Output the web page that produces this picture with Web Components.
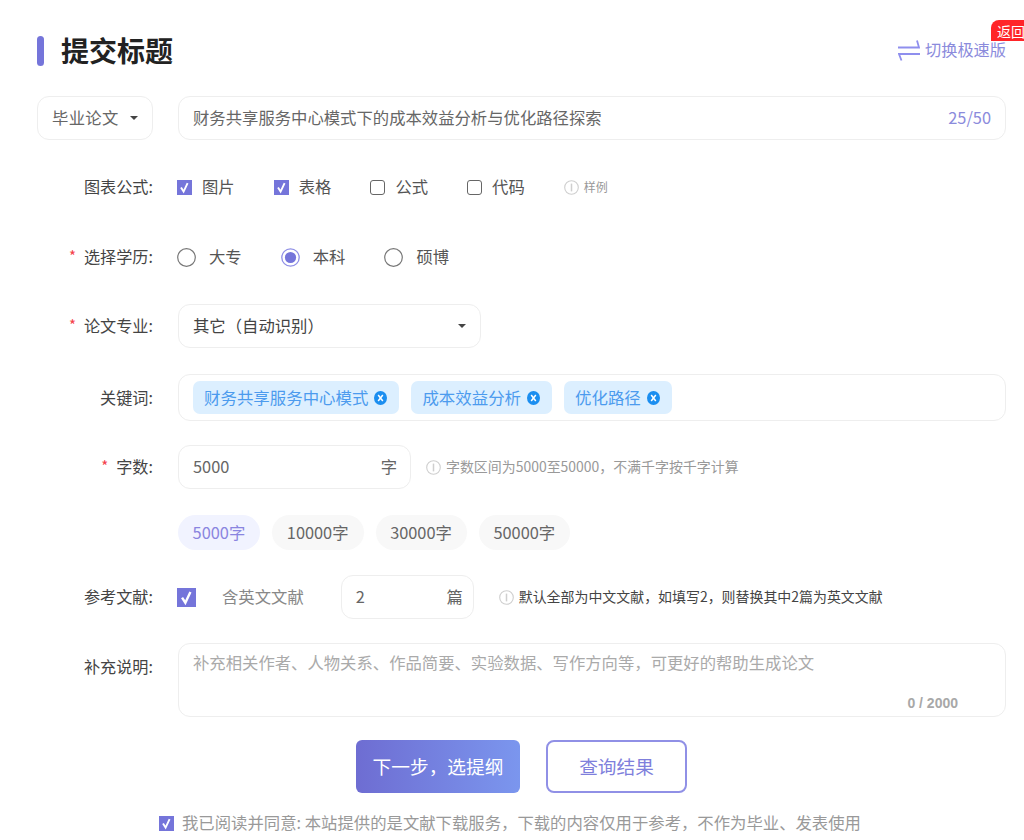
<!DOCTYPE html>
<html lang="zh"><head><meta charset="utf-8"><title>提交标题</title>
<style>
html,body{margin:0;padding:0;background:#fff;}
body{font:16.35px/24px "Noto Sans CJK SC","Liberation Sans",sans-serif;color:#555;}
</style></head>
<body>
<thesis-page>
  <title-head>提交标题</title-head>
  <form-row tall mt="30"><field-box slot="label" style="width:116px;letter-spacing:.3px" caret>毕业论文</field-box>
    <field-box suffix="25/50" accent>财务共享服务中心模式下的成本效益分析与优化路径探索</field-box></form-row>
  <form-row label="图表公式:" mt="35">
    <option-group gap="39">
      <check-item checked>图片</check-item><check-item checked>表格</check-item><check-item>公式</check-item><check-item>代码</check-item>
    </option-group>
    <info-hint small style="margin-left:39px">样例</info-hint>
  </form-row>
  <form-row label="选择学历:" required mt="46">
    <option-group gap="39"><radio-item>大专</radio-item><radio-item checked>本科</radio-item><radio-item>硕博</radio-item></option-group>
  </form-row>
  <form-row label="论文专业:" required mt="35"><field-box style="width:303px" caret dark>其它（自动识别）</field-box></form-row>
  <form-row label="关键词:" mt="26">
    <tag-box><key-tag>财务共享服务中心模式</key-tag><key-tag>成本效益分析</key-tag><key-tag>优化路径</key-tag></tag-box>
  </form-row>
  <form-row label="字数:" required mt="24">
    <field-box style="width:233px;padding-right:13px" suffix="字">5000</field-box>
    <info-hint style="margin-left:15px">字数区间为5000至50000，不满千字按千字计算</info-hint>
  </form-row>
  <form-row mt="26">
    <option-group gap="12"><word-chip active>5000字</word-chip><word-chip>10000字</word-chip><word-chip>30000字</word-chip><word-chip>50000字</word-chip></option-group>
  </form-row>
  <form-row label="参考文献:" mt="25">
    <check-item big muted>含英文文献</check-item>
    <field-box style="width:133px;margin-left:37px;padding-right:10px" suffix="篇">2</field-box>
    <info-hint dark style="margin-left:25px">默认全部为中文文献，如填写2，则替换其中2篇为英文文献</info-hint>
  </form-row>
  <form-row label="补充说明:" top mt="24"><note-area count="0 / 2000">补充相关作者、人物关系、作品简要、实验数据、写作方向等，可更好的帮助生成论文</note-area></form-row>
  <action-bar>
    <action-button primary>下一步，选提纲</action-button>
    <action-button>查询结果</action-button>
  </action-bar>
  <agree-line>我已阅读并同意: 本站提供的是文献下载服务，下载的内容仅用于参考，不作为毕业、发表使用</agree-line>
</thesis-page>
<script>
function def(name, render){
  customElements.define(name, class extends HTMLElement{
    connectedCallback(){
      if(this.shadowRoot) return;
      this.attachShadow({mode:'open'}).innerHTML = render(this);
    }
  });
}
const CHECK='<svg viewBox="0 0 15 15" width="100%" height="100%" style="display:block"><rect width="15" height="15" fill="#7575da"/><path d="M4 7.6 6.6 11.6 10.6 3.2" fill="none" stroke="#fff" stroke-width="1.9"/></svg>';
const INFO=()=>`<svg width="15" height="15" viewBox="0 0 15 15" style="flex:none"><circle cx="7.5" cy="7.5" r="6.8" fill="none" stroke="#cfcfcf" stroke-width="1.1"/><path d="M7.5 3.6V11.4" stroke="#cfcfcf" stroke-width="1.5"/></svg>`;

def('thesis-page',()=>`<style>:host{display:block;position:relative;height:840px;box-sizing:border-box;padding:36px 18px 0 37px;overflow:hidden}
.back{position:absolute;right:-6px;top:20px;width:39px;height:21px;background:#ff2529;color:#fff;border-radius:8px 0 0 0;font-size:14px;line-height:22px;padding-left:6px;box-sizing:border-box;white-space:nowrap;}</style>
<div class="back">返回</div><slot></slot>`);

def('title-head',()=>`<style>:host{display:flex;align-items:center;height:30px}
.bar{width:7px;height:30px;border-radius:4px;background:#7575da;margin-right:17px}
h1{margin:0 0 2px;font-size:28px;line-height:28px;font-weight:700;color:#222;flex:1}
.sw{display:flex;align-items:center;color:#8b8bdc;font-size:16.2px;gap:5px;margin-bottom:1px}
.sw span{padding-bottom:3px}</style>
<div class="bar"></div><h1><slot></slot></h1>
<div class="sw"><svg width="22" height="21" viewBox="0 0 22 21"><path d="M0 7.5H21L19 .5M22 14H1L3.5 20.5" fill="none" stroke="#8f8fee" stroke-width="1.8"/></svg><span>切换极速版</span></div>`);

def('form-row',h=>{
  const top=h.hasAttribute('top'), tall=h.hasAttribute('tall');
  return `<style>:host{display:grid;grid-template-columns:116px 1fr;column-gap:25px;margin-top:${h.getAttribute('mt')||0}px}
.l{display:flex;justify-content:flex-end;align-items:${top?'flex-start':'center'};${top?'padding-top:12px;':tall?'':'padding-bottom:2px;'}line-height:22px;font-size:16.15px;color:#444;white-space:nowrap;gap:8px}
.s{color:#f4404a;font-size:15px}
.c{display:flex;align-items:center;min-width:0}</style>
<div class="l"><slot name="label">${h.hasAttribute('required')?'<span class="s">*</span>':''}${h.getAttribute('label')||''}</slot></div>
<div class="c"><slot></slot></div>`;
});

def('field-box',h=>{
  const suf=h.getAttribute('suffix');
  return `<style>:host{display:flex;align-items:center;flex:${h.style.width?'none':'1'};height:44px;box-sizing:border-box;border:1px solid #eeeeee;border-radius:12px;padding:0 14px;font-size:16.35px;color:${h.hasAttribute('dark')?'#444':'#666'};white-space:nowrap;background:#fff}
.t{flex:1;padding-bottom:2px}.x{padding-bottom:2px;color:${h.hasAttribute('accent')?'#8b8bdc':'#666'}}
.caret{width:0;height:0;border:4.5px solid transparent;border-top:4.5px solid #444;border-bottom:0}</style>
<span class="t"><slot></slot></span>${suf?`<span class="x">${suf}</span>`:''}${h.hasAttribute('caret')?'<span class="caret"></span>':''}`;
});

def('option-group',h=>`<style>:host{display:flex;align-items:center;gap:${h.getAttribute('gap')}px}</style><slot></slot>`);

def('check-item',h=>{
  const big=h.hasAttribute('big'), on=h.hasAttribute('checked')||big, s=big?19:15;
  return `<style>:host{display:inline-flex;align-items:center;gap:${big?26:10}px;color:${big?'#888':'#555'};height:24px;line-height:22px;white-space:nowrap;margin-left:-1px}
:host(:not(:first-child)){margin-left:0}
span+span{padding-bottom:2px}
.b{width:${s}px;height:${s}px;box-sizing:border-box;${on?'':'border:1.3px solid #666;border-radius:3px;'}flex:none}</style>
<span class="b">${on?CHECK:''}</span><span><slot></slot></span>`;
});

def('radio-item',h=>`<style>:host{display:inline-flex;align-items:center;gap:13px;height:24px;line-height:22px;color:#555;white-space:nowrap;margin-left:-1px}
:host(:not(:first-child)){margin-left:0}
span{padding-bottom:2px}
svg{flex:none}</style>
<svg width="19" height="19" viewBox="0 0 19 19">${h.hasAttribute('checked')
 ?'<circle cx="9.5" cy="9.5" r="8.7" fill="#fff" stroke="#8f8fe6" stroke-width="1.3"/><circle cx="9.5" cy="9.5" r="5.6" fill="#7575da"/>'
 :'<circle cx="9.5" cy="9.5" r="8.8" fill="#fff" stroke="#777" stroke-width="1.2"/>'}</svg><span><slot></slot></span>`);

def('tag-box',()=>`<style>:host{display:flex;flex:1;align-items:center;gap:12px;height:47px;box-sizing:border-box;border:1px solid #eeeeee;border-radius:12px;padding:0 14px}</style><slot></slot>`);

def('key-tag',()=>`<style>:host{display:inline-flex;align-items:center;gap:6px;height:33px;padding:0 12px 0 11px;background:#dcefff;border-radius:7px;color:#4c9bee;white-space:nowrap;font-size:16.45px}
span{padding-bottom:2px}
svg{flex:none}</style><span><slot></slot></span>
<svg width="13" height="14" viewBox="0 0 13 14"><ellipse cx="6.5" cy="7" rx="6.5" ry="7" fill="#1b8ef0"/><path d="M4.2 4 8.8 10M8.8 4 4.2 10" stroke="#fff" stroke-width="1.5"/></svg>`);

def('word-chip',h=>`<style>:host{display:inline-flex;align-items:center;height:35px;padding:0 15px 0 14.6px;border-radius:18px;white-space:nowrap;background:${h.hasAttribute('active')?'#f1f3ff':'#f8f8f8'};color:${h.hasAttribute('active')?'#8a85e0':'#666'}}
span{padding-bottom:2px}</style><span><slot></slot></span>`);

def('info-hint',h=>`<style>:host{display:inline-flex;align-items:center;gap:5px;height:24px;line-height:22px;white-space:nowrap;font-size:${h.hasAttribute('small')?'12px':'13.95px'};color:${h.hasAttribute('dark')?'#444':'#999'}}
span{padding-bottom:${h.hasAttribute('small')?0:2}px}</style>${INFO()}<span><slot></slot></span>`);

def('note-area',h=>`<style>:host{display:block;flex:1;position:relative;height:74px;box-sizing:border-box;border:1px solid #eeeeee;border-radius:12px;padding:6px 14px;color:#aaa;font-size:16.35px}
.n{position:absolute;right:47px;bottom:1px;font:700 14px/24px "Liberation Sans",sans-serif;color:#a8a8a8}</style>
<slot></slot><span class="n">${h.getAttribute('count')}</span>`);

def('action-bar',()=>`<style>:host{display:flex;gap:26px;margin:23px 0 0 319px}</style><slot></slot>`);

def('action-button',h=>{const p=h.hasAttribute('primary');return `<style>:host{display:flex;align-items:center;justify-content:center;box-sizing:border-box;height:53px;width:${p?164:141}px;font-size:18.7px;white-space:nowrap;border-radius:${p?6:8}px;${p?'background:linear-gradient(90deg,#6e6dd2,#7b96ee);color:#fff;':'border:2px solid #9090e6;color:#7f7fdc;background:#fff;'}}
span{padding-bottom:2px}</style><span><slot></slot></span>`});

def('agree-line',()=>`<style>:host{display:flex;align-items:center;gap:8px;height:24px;line-height:22px;margin:18px 0 0 122px;color:#999;white-space:nowrap;font-size:16.38px}
span+span{padding-bottom:2px}
.b{width:15px;height:15px;flex:none}</style><span class="b">${CHECK}</span><span><slot></slot></span>`);
</script>
</body></html>
